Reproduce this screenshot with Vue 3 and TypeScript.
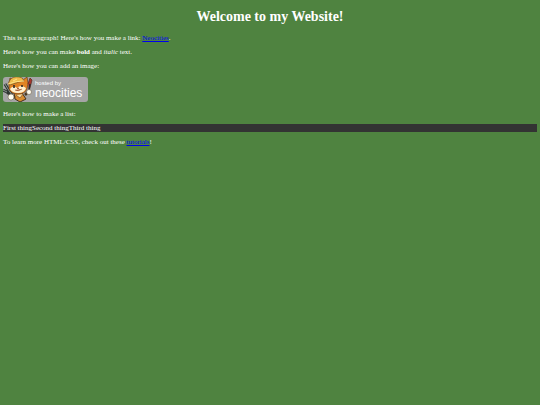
<script setup lang="ts">
const things: string[] = ['First thing', 'Second thing', 'Third thing']
</script>

<template>
  <main class="page">
    <h1>Welcome to my Website!</h1>
    <p>This is a paragraph! Here's how you make a link: <a href="https://neocities.org">Neocities</a>.</p>
    <p>Here's how you can make <strong>bold</strong> and <em>italic</em> text.</p>
    <p>Here's how you can add an image:</p>
    <div class="badge">
      <svg class="cat" viewBox="0 0 30 25" aria-hidden="true">
        <path d="M2 7L5 12L9 18M0 13L4 15L9 19" stroke="#303632" stroke-width="3" fill="none" />
        <path d="M2 7L5 12L9 18M0 13L4 15" stroke="#8b9891" fill="none" />
        <path d="M11 16L19 16L23 22L17 25L12 22Z" fill="#d78b2f" stroke="#45301c" />
        <path d="M13 18L17 21L20 17" fill="#f9dfa0" stroke="#684222" stroke-width=".6" />
        <path d="M6 6L7 1L11 3L20 3L24 0L25 6L24 12Q22 17 15 17Q8 17 6 12Z" fill="#e08323" stroke="#653c1d" stroke-width=".7" />
        <path d="M7 3Q10 -1 16 0Q20 0 21 4L16 5L7 8L5 7Z" fill="#efbd4b" stroke="#795022" stroke-width=".7" />
        <path d="M5 7Q12 4 21 4M10 4L14 2" fill="none" stroke="#ffe188" />
        <path d="M7 12Q10 8 14 11Q18 7 23 11Q22 16 15 16Q9 16 7 12Z" fill="#fff0cd" />
        <path d="M11 8V11M19 8V10" stroke="#2d2926" stroke-width="1.6" />
        <path d="M14 11H16L15 12ZM12 13Q15 15 19 12" fill="#9c4b25" stroke="#9c4b25" stroke-width=".6" />
        <path d="M25 7L27 1L29 3L28 7L26 14" fill="#a9352b" stroke="#552a22" stroke-width=".7" />
        <path d="M27 7L26 13" stroke="#272d2b" stroke-width="1.5" />
        <path d="M22 18L25 15M12 19L9 21" stroke="#49371f" stroke-width="2.5" />
        <circle cx="26" cy="15" r="2.5" fill="#fffdf0" stroke="#695a48" stroke-width=".6" />
        <circle cx="8" cy="20" r="3" fill="#fffdf0" stroke="#695a48" stroke-width=".6" />
      </svg>
      <div class="wordmark">
        <span class="hosted">hosted by</span>
        <span class="name">neocities</span>
      </div>
    </div>
    <p>Here's how to make a list:</p>
    <ul>
      <li v-for="thing in things" :key="thing">{{ thing }}</li>
    </ul>
    <p>To learn more HTML/CSS, check out these <a href="https://neocities.org/tutorials">tutorials</a>!</p>
  </main>
</template>

<style>
body {
  background: #4f8340;
}
</style>

<style scoped>
.page {
  padding: 9px 3px;
  color: #fff;
  font: 7px/8px "Liberation Serif", "Times New Roman", serif;
}
h1 {
  margin: 0 0 9px;
  font-size: 14px;
  line-height: 16px;
  text-align: center;
}
p {
  margin: 0 0 6px;
}
a {
  color: #0000ee;
}
.badge {
  display: flex;
  width: 85px;
  height: 25px;
  margin: 7px 0 8px;
  border-radius: 3px;
  background: #a5a5a5;
}
.cat {
  flex: none;
  width: 30px;
  height: 25px;
}
.wordmark {
  display: flex;
  flex-direction: column;
  padding: 3px 0 0 2px;
}
.hosted {
  font-family: "Liberation Sans", Arial, sans-serif;
  font-size: 6px;
  line-height: 7px;
}
.name {
  font-family: "Liberation Sans", Arial, sans-serif;
  font-size: 12px;
  line-height: 12px;
}
ul {
  display: flex;
  margin: 0 0 6px;
  padding: 0;
  background: #333;
  list-style: none;
}
</style>
